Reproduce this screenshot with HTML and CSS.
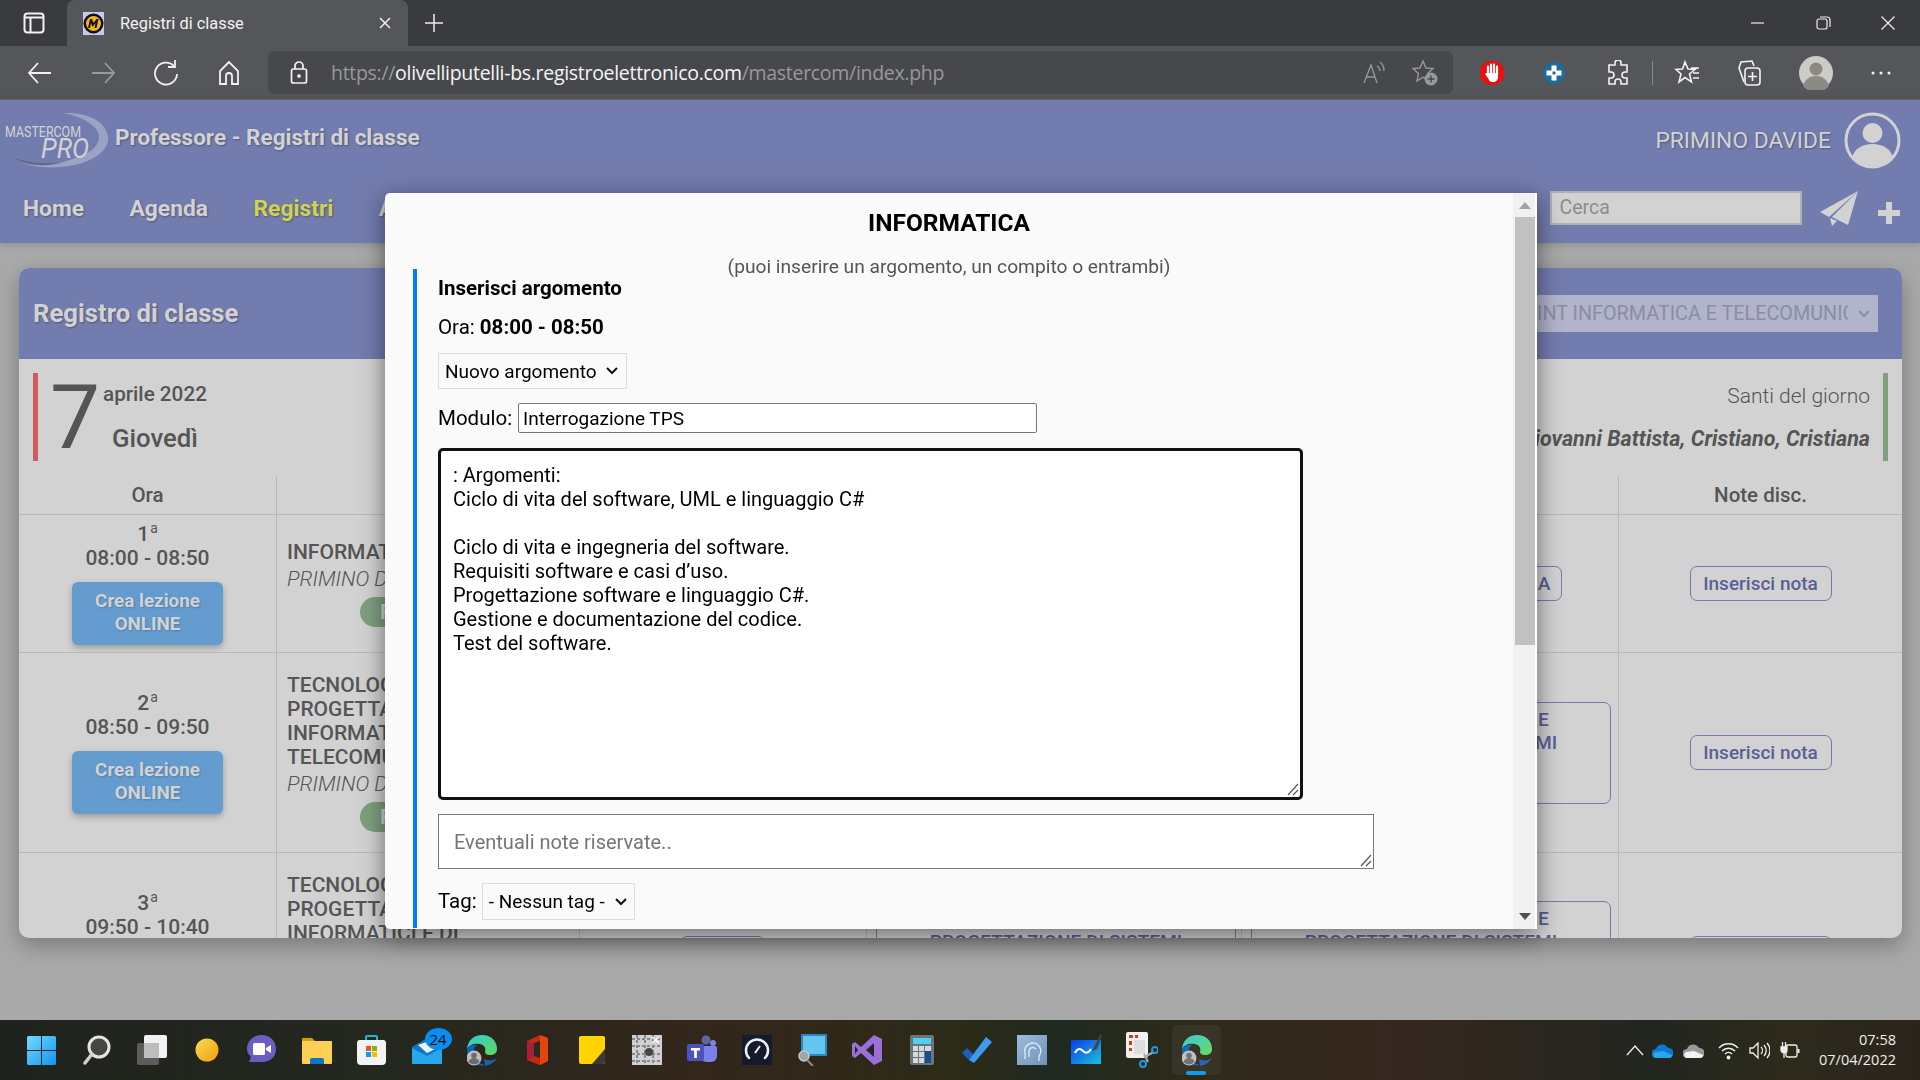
FILE: index.html
```html
<!DOCTYPE html>
<html lang="it">
<head>
<meta charset="utf-8">
<title>Registri di classe</title>
<link rel="stylesheet" href="styles.css">
</head>
<body>
<div class="screen">

  <div class="tabstrip">
    <div class="sidebtn"><svg width="22" height="22" viewBox="0 0 22 22" fill="none" stroke="#f2f2f2" stroke-width="2"><rect x="1.500" y="1.500" width="19" height="19" rx="3"/><path d="M1.500 5.500h19M7.500 5.500v15" /></svg></div>
    <div class="tab">
      <svg class="favicon" width="21" height="23" viewBox="0 0 21 23"><rect width="21" height="23" fill="#c9c9ee"/><circle cx="10.500" cy="11.500" r="10" fill="#111"/><circle cx="10.500" cy="11.500" r="7.500" fill="#f4b41a"/><path d="M5 16l2-9h2l1.500 4 3-4h2l-2 9h-2l1-5-3 4-1.500-4-1 5z" fill="#111"/></svg>
      <span class="tabtitle">Registri di classe</span>
      <svg class="tabclose" width="14" height="14" viewBox="0 0 14 14" stroke="#eee" stroke-width="1.500"><path d="M2 2l10 10M12 2L2 12"/></svg>
    </div>
    <svg class="newtab" width="20" height="20" viewBox="0 0 20 20" stroke="#eee" stroke-width="1.500"><path d="M10 1v18M1 10h18"/></svg>
    <div class="winctl">
      <svg width="16" height="16" viewBox="0 0 16 16" stroke="#eee" stroke-width="1.200" fill="none"><path d="M1 8h13"/></svg>
      <svg width="16" height="16" viewBox="0 0 16 16" stroke="#eee" stroke-width="1.200" fill="none"><rect x="2" y="4" width="10" height="10" rx="2"/><path d="M5 2h7a3 3 0 0 1 3 3v7"/></svg>
      <svg width="16" height="16" viewBox="0 0 16 16" stroke="#eee" stroke-width="1.200" fill="none"><path d="M1.500 1.500l13 13M14.500 1.500l-13 13"/></svg>
    </div>
  </div>

  <div class="toolbar">
    <div class="navicons">
      <svg width="28" height="28" viewBox="0 0 28 28" fill="none" stroke="#f2f2f2" stroke-width="1.800"><path d="M25 14H3M12 4L3 14l9 10"/></svg>
      <svg width="28" height="28" viewBox="0 0 28 28" fill="none" stroke="#98999c" stroke-width="1.800"><path d="M3 14h22M16 4l9 10-9 10"/></svg>
      <svg width="28" height="28" viewBox="0 0 28 28" fill="none" stroke="#f2f2f2" stroke-width="1.800"><path d="M22 7a11 11 0 1 0 3 8M23 1v7h-7"/></svg>
      <svg width="28" height="28" viewBox="0 0 28 28" fill="none" stroke="#f2f2f2" stroke-width="1.800"><path d="M14 3L5 12v13h6v-8a3 3 0 0 1 6 0v8h6V12z"/></svg>
    </div>
    <div class="urlbar">
      <svg class="lock" width="20" height="24" viewBox="0 0 20 24" fill="none" stroke="#f2f2f2" stroke-width="1.700"><rect x="2.500" y="8" width="15" height="14" rx="2"/><path d="M6 8V5a4 4 0 0 1 8 0v3"/><circle cx="10" cy="15" r="1" fill="#f2f2f2"/></svg>
      <span class="url">https://<b class="urlhost">olivelliputelli-bs.registroelettronico.com</b>/mastercom/index.php</span>
      <svg class="readaloud" width="26" height="26" viewBox="0 0 26 26" fill="none" stroke="#98999c" stroke-width="1.300"><path d="M3 23L10 5l6 18M5.500 17h9"/><path d="M16 6a6 6 0 0 1 3 5M19 2a11 11 0 0 1 4 9"/></svg>
      <svg class="favadd" width="28" height="28" viewBox="0 0 28 28"><path d="M12 2l3 7 7 .6-5.300 5 1.500 7.400-6.200-3.800L6 22l1.500-7.400L2 9.600 9 9z" fill="none" stroke="#98999c" stroke-width="1.400"/><circle cx="20" cy="20" r="6.500" fill="#98999c"/><path d="M20 16.500v7M16.500 20h7" stroke="#47484c" stroke-width="1.400"/></svg>
    </div>
    <div class="exticons">
      <svg width="24" height="24" viewBox="0 0 24 24"><path d="M7 0h10l7 7v10l-7 7H7l-7-7V7z" fill="#e81010"/><path d="M8 5.500v9M11 3.500v10M14 3.500v10M17 5.500v9" stroke="#fff" stroke-width="2.200" stroke-linecap="round"/><path d="M7 12h11v4c0 3-2 5-5 5-3 0-4-1.500-5-4l-3-4 1.500-1z" fill="#fff"/></svg>
      <svg width="24" height="24" viewBox="0 0 24 24"><circle cx="12" cy="12" r="11" fill="#1d6c9b"/><path d="M9.500 4.500h5v5h5v5h-5v5h-5v-5h-5v-5h5z" fill="#fff"/><rect x="10.500" y="10.500" width="3" height="3" fill="#1d6c9b"/></svg>
      <svg width="26" height="26" viewBox="0 0 26 26" fill="none" stroke="#f2f2f2" stroke-width="1.600"><path d="M10 3a3 3 0 0 1 6 0v2h6v7h-2a3 3 0 0 0 0 6h2v6h-6v-2a3 3 0 0 0-6 0v2H4v-6h2a3 3 0 0 0 0-6H4V5h6z"/></svg>
      <span class="extsep"></span>
      <svg width="28" height="28" viewBox="0 0 28 28" fill="none" stroke="#f2f2f2" stroke-width="1.600"><path d="M11 3l3 7 7 .5-5.500 4.500 2 8-6.500-4.500L5 23l2-8-5-4.500L8.500 10zM17 9h8M19 14h6M19 19h6"/></svg>
      <svg width="28" height="28" viewBox="0 0 28 28" fill="none" stroke="#f2f2f2" stroke-width="1.600"><path d="M9 23L4 9l2-6 11-1 2 5"/><rect x="10" y="9" width="15" height="17" rx="3"/><path d="M17.500 13v9M13 17.500h9"/></svg>
      <svg width="34" height="34" viewBox="0 0 34 34"><circle cx="17" cy="17" r="17" fill="#cdcbc5"/><circle cx="17" cy="13" r="6.500" fill="#8c8a84"/><path d="M4 30c2-7 7-10 13-10s11 3 13 10a17 17 0 0 1-26 0z" fill="#8c8a84"/></svg>
      <svg width="24" height="24" viewBox="0 0 24 24" fill="#f2f2f2"><circle cx="4" cy="12" r="1.500"/><circle cx="12" cy="12" r="1.500"/><circle cx="20" cy="12" r="1.500"/></svg>
    </div>
  </div>

  <div class="app">
    <header class="apphead">
      <div class="headtop">
        <svg class="logo" width="106" height="56" viewBox="0 0 106 56"><path d="M60 0c26-1 44 9 45 25 1 18-30 32-66 29-12-1-24-5-30-10 16 6 38 8 54 4 20-5 33-13 33-24C96 13 80 4 60 0z" fill="#9ba3c4"/><path d="M9 44c16 6 38 8 54 4-18 7-42 5-54-4z" fill="#5c6a86"/><text class="logotxt1" x="2" y="24" textLength="76" lengthAdjust="spacingAndGlyphs">MASTERCOM</text><text class="logotxt2" x="38" y="45" textLength="48" lengthAdjust="spacingAndGlyphs">PRO</text></svg>
        <h1 class="apptitle">Professore - Registri di classe</h1>
        <div class="user">
          <span class="username">PRIMINO DAVIDE</span>
          <svg width="57" height="57" viewBox="0 0 57 57"><circle cx="28.500" cy="28.500" r="26.500" fill="none" stroke="#d2d2d2" stroke-width="3"/><circle cx="28.500" cy="21" r="10" fill="#d2d2d2"/><path d="M8 46c2-9 10-14 20.500-14S47 37 49 46c-5 5-12 8-20.500 8S13 51 8 46z" fill="#d2d2d2"/></svg>
        </div>
      </div>
      <nav class="headnav">
        <a class="navlink">Home</a>
        <a class="navlink">Agenda</a>
        <a class="navlink navactive">Registri</a>
        <a class="navlink">Altro</a>
        <div class="navright">
          <div class="search">Cerca</div>
          <svg class="send" width="38" height="35" viewBox="0 0 38 35" fill="#d2d2d2"><path d="M38 0L0 21l9 5z"/><path d="M38 0L12 26l16 8z"/><path d="M10 27l2 8 5-5z"/></svg>
          <svg class="plus" width="22" height="22" viewBox="0 0 22 22" fill="#d2d2d2"><path d="M8 0h6v8h8v6h-8v8H8v-8H0V8h8z"/></svg>
        </div>
      </nav>
    </header>

    <section class="panel">
      <div class="panelhead">
        <h2 class="paneltitle">Registro di classe</h2>
        <div class="classsel"><span class="classtxt">5 INT INFORMATICA E TELECOMUNICAZIONI</span><svg width="14" height="10" viewBox="0 0 14 10" fill="none" stroke="#8a8da8" stroke-width="2"><path d="M2 2l5 5 5-5"/></svg></div>
      </div>
      <div class="daterow">
        <div class="dateleft">
          <span class="daynum">7</span>
          <div class="datetxt"><span class="month">aprile 2022</span><span class="weekday">Giovedì</span></div>
        </div>
        <div class="saints">
          <span class="saintlabel">Santi del giorno</span>
          <span class="saintnames">Giovanni Battista, Cristiano, Cristiana</span>
        </div>
      </div>
      <div class="tr thead">
        <div class="td">Ora</div><div class="td"></div><div class="td"></div><div class="td"></div><div class="td"></div><div class="td">Note disc.</div>
      </div>
      <div class="tr row1">
        <div class="td hour"><span class="hnum">1<sup>a</sup></span><span>08:00 - 08:50</span><a class="online">Crea lezione<br>ONLINE</a></div>
        <div class="td subj"><span>INFORMATICA</span><em class="teacher">PRIMINO DAVIDE</em><span class="pillwrap"><span class="pill">Firma</span></span></div>
        <div class="td"></div>
        <div class="td"></div>
        <div class="td center"><a class="boxbtn short">INSERISCI FIRMA</a></div>
        <div class="td center"><a class="notebtn">Inserisci nota</a></div>
      </div>
      <div class="tr row2">
        <div class="td hour"><span class="hnum">2<sup>a</sup></span><span>08:50 - 09:50</span><a class="online">Crea lezione<br>ONLINE</a></div>
        <div class="td subj"><span>TECNOLOGIE E<br>PROGETTAZIONE DI SISTEMI<br>INFORMATICI E DI<br>TELECOMUNICAZIONI</span><em class="teacher">PRIMINO DAVIDE</em><span class="pillwrap"><span class="pill">Firma</span></span></div>
        <div class="td"></div>
        <div class="td"></div>
        <div class="td center"><div class="lessonbox"><span class="lessontitle">TECNOLOGIE E SISTEMI E</span><span>PROGETTAZIONE DI SISTEMI</span></div></div>
        <div class="td center"><a class="notebtn">Inserisci nota</a></div>
      </div>
      <div class="tr row3">
        <div class="td hour"><span class="hnum">3<sup>a</sup></span><span>09:50 - 10:40</span></div>
        <div class="td subj"><span>TECNOLOGIE E<br>PROGETTAZIONE DI SISTEMI<br>INFORMATICI E DI<br>TELECOMUNICAZIONI</span></div>
        <div class="td"><a class="colbtn">Firma</a></div>
        <div class="td"><div class="lessonbox nextbox"><span class="lessontitle">TECNOLOGIE E SISTEMI E</span><span>PROGETTAZIONE DI SISTEMI</span></div></div>
        <div class="td"><div class="lessonbox nextbox"><span class="lessontitle">TECNOLOGIE E SISTEMI E</span><span>PROGETTAZIONE DI SISTEMI</span></div></div>
        <div class="td center top"><a class="notebtn">Inserisci nota</a></div>
      </div>
    </section>

    <div class="modal">
      <div class="modalbody">
        <h3 class="modaltitle">INFORMATICA</h3>
        <p class="modalsub">(puoi inserire un argomento, un compito o entrambi)</p>
        <div class="formblock">
          <div class="formhead">Inserisci argomento</div>
          <div class="formora">Ora: <b>08:00 - 08:50</b></div>
          <select class="sel selarg"><option>Nuovo argomento</option></select>
          <div class="modrow"><label class="modlabel">Modulo:</label><input class="modinput" type="text" value="Interrogazione TPS"></div>
          <textarea class="argarea" spellcheck="false">: Argomenti:
Ciclo di vita del software, UML e linguaggio C#

Ciclo di vita e ingegneria del software.
Requisiti software e casi d’uso.
Progettazione software e linguaggio C#.
Gestione e documentazione del codice.
Test del software.</textarea>
          <textarea class="notearea" placeholder="Eventuali note riservate.."></textarea>
          <div class="tagrow"><label class="taglabel">Tag:</label><select class="sel seltag"><option>- Nessun tag -</option></select></div>
        </div>
      </div>
      <div class="scrollbar">
        <span class="arrowup"></span>
        <span class="thumb"></span>
        <span class="arrowdown"></span>
      </div>
    </div>
  </div>

  <footer class="taskbar">
    <div class="tbicons">
      <div class="tbi"><svg width="29" height="29" viewBox="0 0 29 29"><defs><linearGradient id="w" x1="0" y1="0" x2="1" y2="1"><stop offset="0" stop-color="#6fdcff"/><stop offset="1" stop-color="#1492f0"/></linearGradient></defs><path d="M0 1.500A1.500 1.500 0 0 1 1.500 0H14v14H0zM15 0h12.500A1.500 1.500 0 0 1 29 1.500V14H15zM0 15h14v14H1.500A1.500 1.500 0 0 1 0 27.500zM15 15h14v12.500a1.500 1.500 0 0 1-1.500 1.500H15z" fill="url(#w)"/></svg></div>
      <div class="tbi"><svg width="28" height="30" viewBox="0 0 28 30"><circle cx="16" cy="12" r="10" fill="#43473f" stroke="#e4e4e4" stroke-width="3"/><path d="M9 19L2 28" stroke="#d0d0d0" stroke-width="3.500" stroke-linecap="round"/></svg></div>
      <div class="tbi"><svg width="30" height="30" viewBox="0 0 30 30"><rect x="0" y="8" width="22" height="22" rx="2" fill="#5c5c5c"/><rect x="7" y="0" width="23" height="23" rx="2" fill="#f2f2f2"/><rect x="7" y="8" width="15" height="15" fill="#bdbdbd"/></svg></div>
      <div class="tbi"><svg width="24" height="24" viewBox="0 0 24 24"><defs><linearGradient id="y" x1="0" y1="0" x2="1" y2="1"><stop offset="0" stop-color="#f8de50"/><stop offset="1" stop-color="#f59a12"/></linearGradient></defs><circle cx="12" cy="12" r="11.500" fill="url(#y)"/></svg></div>
      <div class="tbi"><svg width="29" height="30" viewBox="0 0 29 30"><path d="M14.500 0C23 0 29 6 29 14s-6 13-14 13H2l2-5C1.500 19.500 0 17 0 14 0 6 6 0 14.500 0z" fill="#6a5fc1"/><rect x="6" y="8" width="12" height="12" rx="1.500" fill="#fff"/><path d="M19 13l5-3v8l-5-3z" fill="#fff"/></svg></div>
      <div class="tbi"><svg width="30" height="28" viewBox="0 0 30 28"><path d="M0 3a1 1 0 0 1 1-1h9l3 3h16a1 1 0 0 1 1 1v4H0z" fill="#d99e0b"/><rect y="5" width="30" height="23" rx="1" fill="#fcd055"/><path d="M8 24a2 2 0 0 1 2-2h10a2 2 0 0 1 2 2v4H8z" fill="#0a74c9"/></svg></div>
      <div class="tbi"><svg width="29" height="30" viewBox="0 0 29 30"><path d="M9 6V2a1 1 0 0 1 1-1h9a1 1 0 0 1 1 1v4" fill="none" stroke="#22b5d8" stroke-width="2"/><path d="M0 8a3 3 0 0 1 2-3h25a3 3 0 0 1 2 3v18a4 4 0 0 1-4 4H4a4 4 0 0 1-4-4z" fill="#f3f3f3"/><rect x="9" y="11" width="5" height="5" fill="#f25022"/><rect x="15" y="11" width="5" height="5" fill="#7fba00"/><rect x="9" y="17" width="5" height="5" fill="#00a4ef"/><rect x="15" y="17" width="5" height="5" fill="#ffb900"/></svg></div>
      <div class="tbi mailitem"><svg width="30" height="27" viewBox="0 0 30 27"><path d="M0 10L17 0l13 10v17H0z" fill="#0f79c9"/><path d="M6 8L20 3l5 8-10 5z" fill="#f4f4f4"/><path d="M0 11l15 8 15-8v16H0z" fill="#28a8ea"/></svg><span class="badge">24</span></div>
      <div class="tbi"><svg class="edge" width="30" height="31" viewBox="0 0 30 31"><use href="#edgeicon"/></svg></div>
      <div class="tbi"><svg width="24" height="30" viewBox="0 0 24 30"><path d="M2 6L15 0l8 3v23l-8 4-13-5z" fill="#c42a12"/><path d="M15 0l8 3v23l-8 4z" fill="#e6430f"/><path d="M9 8l6-2v17l-6-2z" fill="#2a2a20"/><path d="M2 6l7 2v13l-7 4z" fill="#a81f3c"/></svg></div>
      <div class="tbi"><svg width="26" height="28" viewBox="0 0 26 28"><rect width="26" height="28" rx="2" fill="#ffd400"/><path d="M26 13v13a2 2 0 0 1-2 2H13z" fill="#3c3a36"/></svg></div>
      <div class="tbi"><svg width="30" height="30" viewBox="0 0 30 30"><rect width="30" height="30" fill="#d0d0d0"/><path d="M0 4h30M0 11h30M0 19h30M0 26h30M5 0v30M13 0v30M21 0v30" stroke="#85888a" stroke-width="2" stroke-dasharray="3 2"/><circle cx="17" cy="17" r="4" fill="#444"/><path d="M20 2l7 6M27 2l-7 6" stroke="#fff" stroke-width="1.500"/></svg></div>
      <div class="tbi"><svg width="30" height="30" viewBox="0 0 30 30"><circle cx="19" cy="5" r="4.500" fill="#6264a7"/><circle cx="26" cy="8" r="3" fill="#7b83eb"/><path d="M12 11h16a2 2 0 0 1 2 2v8a6 6 0 0 1-6 6h-4a8 8 0 0 1-8-8z" fill="#7b83eb"/><rect y="9" width="17" height="17" rx="2" fill="#4b53bc"/><path d="M4 13h9v2.500H9.900V23H7.100v-7.500H4z" fill="#fff"/></svg></div>
      <div class="tbi"><svg width="30" height="30" viewBox="0 0 30 30"><rect width="30" height="30" fill="#141b2e"/><path d="M7 23a11 11 0 1 1 16 0" fill="none" stroke="#f2f2f2" stroke-width="2.500" stroke-linecap="round"/><path d="M13 18l5-7" stroke="#f2f2f2" stroke-width="2"/></svg></div>
      <div class="tbi"><svg width="30" height="32" viewBox="0 0 30 32"><rect x="4" width="26" height="22" fill="#2e86c1"/><rect x="6" y="2" width="22" height="18" fill="#63c6ef"/><circle cx="7" cy="22" r="5" fill="#9aa8ad" stroke="#c9c9c9" stroke-width="1.500"/><path d="M10 26l6 6" stroke="#8a8a8a" stroke-width="2"/></svg></div>
      <div class="tbi"><svg width="30" height="30" viewBox="0 0 30 30"><path d="M22 0l8 4v22l-8 4L9 18l-6 5-3-2V9l3-2 6 5z" fill="#9a6fd8"/><path d="M22 8L14 15l8 7z" fill="#26252a"/><path d="M3 11l3 4-3 4z" fill="#26252a"/></svg></div>
      <div class="tbi"><svg width="24" height="30" viewBox="0 0 24 30"><rect width="24" height="30" rx="2" fill="#6b7479"/><rect x="3" y="3" width="18" height="6" fill="#4fd0ee"/><path d="M3 11h5v5H3zM9 11h5v5H9zM3 17h5v5H3zM9 17h5v5H9zM3 23h5v5H3zM9 23h5v5H9z" fill="#d5d9dc"/><rect x="15" y="11" width="6" height="17" fill="#144e92"/><rect x="15" y="11" width="6" height="5" fill="#d5d9dc"/></svg></div>
      <div class="tbi"><svg width="30" height="26" viewBox="0 0 30 26"><path d="M0 16l5-5 7 7-5 5z" fill="#1c5dbf"/><path d="M7 23L24 0l6 5-18 21z" fill="#3c9bf0"/></svg></div>
      <div class="tbi"><svg width="30" height="30" viewBox="0 0 30 30"><defs><linearGradient id="h" x1="0" y1="0" x2="1" y2="1"><stop offset="0" stop-color="#9dbcdb"/><stop offset="1" stop-color="#6f93b8"/></linearGradient></defs><rect width="30" height="30" fill="url(#h)"/><path d="M8 24v-6a8 8 0 1 1 14 3v5M12 22v-6a4 4 0 0 1 7-2" fill="none" stroke="#e3ebf2" stroke-width="1.300"/></svg></div>
      <div class="tbi"><svg width="32" height="30" viewBox="0 0 32 30"><defs><linearGradient id="b" x1="0" y1="0" x2="1" y2="1"><stop offset="0" stop-color="#0b3cf0"/><stop offset="1" stop-color="#1cc2d8"/></linearGradient></defs><path d="M0 6a1 1 0 0 1 1-1h29v23a1 1 0 0 1-1 1H1a1 1 0 0 1-1-1z" fill="url(#b)"/><path d="M4 18c3-6 6-4 8-2s5 3 8-2" fill="none" stroke="#fff" stroke-width="2"/><path d="M21 16L29 0h2l-5 14z" fill="#444"/></svg></div>
      <div class="tbi"><svg width="32" height="36" viewBox="0 0 32 36"><rect width="22" height="26" rx="2" fill="#f0f0f0"/><path d="M3 3h4v3H3zM9 3h3v3H9zM3 9h3v4H3zM3 16h3v3H3z" fill="#d43b1e"/><rect x="8" y="8" width="11" height="14" fill="#ddd"/><path d="M18 22l4 8M28 20l-10 5" stroke="#aaa" stroke-width="2"/><circle cx="17" cy="32" r="3" fill="none" stroke="#1e9be0" stroke-width="2"/><circle cx="29" cy="18" r="3" fill="none" stroke="#1e9be0" stroke-width="2"/></svg></div>
      <div class="tbi tbactive"><svg class="edge" width="30" height="31" viewBox="0 0 30 31"><use href="#edgeicon"/></svg><span class="tbunder"></span></div>
    </div>
    <div class="tray">
      <svg class="chev" width="18" height="12" viewBox="0 0 18 12" fill="none" stroke="#eee" stroke-width="1.300"><path d="M1 11l8-9 8 9"/></svg>
      <svg width="21" height="15" viewBox="0 0 21 15"><path d="M4 6a6.500 6.500 0 0 1 12-1 4.800 4.800 0 0 1 1 10H4a4 4 0 0 1 0-9z" fill="#0a78d4"/><path d="M3 15a3.500 3.500 0 0 1 0-6l8-1 9 4c.5 1-1 3-3 3z" fill="#28a8ea"/></svg>
      <svg width="21" height="15" viewBox="0 0 21 15"><path d="M4 6a6.500 6.500 0 0 1 12-1 4.800 4.800 0 0 1 1 10H4a4 4 0 0 1 0-9z" fill="#9a9a9a"/><path d="M3 15a3.500 3.500 0 0 1 0-6l8-1 9 4c.5 1-1 3-3 3z" fill="#f2f2f2"/></svg>
      <svg class="wifi" width="21" height="19" viewBox="0 0 21 19" fill="none" stroke="#eee" stroke-width="1.500"><path d="M1 7a13 13 0 0 1 19 0M4 10a9 9 0 0 1 13 0M7 13a5 5 0 0 1 7 0"/><circle cx="10.500" cy="16.500" r="1.200" fill="#eee"/></svg>
      <svg width="21" height="19" viewBox="0 0 21 19" fill="none" stroke="#eee" stroke-width="1.300"><path d="M1 7v5h3l5 5V2L4 7zM12 6a5 5 0 0 1 0 7M15 4a8 8 0 0 1 0 11M18 2a11 11 0 0 1 0 15"/></svg>
      <svg width="20" height="19" viewBox="0 0 20 19" fill="none" stroke="#eee" stroke-width="1.300"><rect x="6" y="4" width="11" height="12" rx="2"/><path d="M18.500 8v4" stroke-width="2"/><path d="M1 6h6v3a3 3 0 0 1-6 0zM2.500 1v5M5.500 1v5M4 12v5" fill="#eee"/></svg>
    </div>
    <div class="clock"><span>07:58</span><span>07/04/2022</span></div>
  </footer>
</div>

<svg class="defs" width="0" height="0"><defs>
  <linearGradient id="eg" x1="0" y1="0" x2="1" y2="1"><stop offset="0" stop-color="#33c6d8"/><stop offset="1" stop-color="#5fdc58"/></linearGradient>
  <g id="edgeicon"><path d="M0 14C1 5 7 0 15 0c9 0 15 6 15 14 0 4-3 6-7 6-3 0-5-1-5-3 1-3 0-7-5-8C7 8 2 10 0 14z" fill="url(#eg)"/><path d="M0 14c2-3 6-5 10-4-3 2-4 6-3 10 1 5 6 9 11 10-2 .5-3 .5-4 .5C6 30.500 0 23 0 14z" fill="#0b63b6"/><path d="M18 31c5-1 9-3 12-8-4 3-9 3-13 1z" fill="#1e5fa8"/><circle cx="7" cy="23" r="7.500" fill="#bdbdbd"/><circle cx="7" cy="20.500" r="2.800" fill="#6c6c6c"/><path d="M1.500 27c1-3 3-4 5.500-4s4.500 1 5.500 4a7.500 7.500 0 0 1-11 0z" fill="#6c6c6c"/></g>
</defs></svg>
</body>
</html>
```
FILE: styles.css
```css
* { box-sizing: border-box; }
html, body { margin: 0; padding: 0; height: 100%; overflow: hidden; }
body { font-family: Roboto, "Liberation Sans", sans-serif; background: #a9a9a9; }
a { display: block; }
.defs { position: absolute; }
.screen { width: 1920px; height: 1080px; display: flex; flex-direction: column; overflow: hidden; }

/* browser chrome */
.tabstrip { height: 46px; background: #3a3b3f; display: flex; align-items: center; flex: none; }
.sidebtn { width: 67px; display: flex; justify-content: center; }
.tab { width: 341px; height: 46px; background: #55565a; border-radius: 8px 8px 0 0; display: flex; align-items: center; padding-left: 16px; color: #f2f2f2; font-size: 16.400px; }
.tabtitle { margin-left: 16px; flex: 1; }
.tabclose { margin-right: 16px; }
.newtab { margin-left: 16px; }
.winctl { margin-left: auto; display: flex; gap: 49px; padding-right: 24px; }
.toolbar { height: 54px; background: #55565a; border-bottom: 1px solid #6a6b6f; display: flex; align-items: center; flex: none; }
.navicons { width: 268px; padding-left: 26px; display: flex; gap: 35px; }
.urlbar { width: 1185px; height: 43px; background: #47484c; border-radius: 6px; display: flex; align-items: center; padding-left: 21px; }
.url { margin-left: 22px; font-size: 19.500px; color: #98999c; font-family: "Open Sans", Roboto, sans-serif; letter-spacing: -0.300px; flex: 1; white-space: nowrap; }
.urlhost { color: #f5f5f5; font-weight: 400; }
.readaloud { margin-right: 24px; }
.favadd { margin-right: 14px; }
.exticons { flex: 1; display: flex; align-items: center; padding-left: 27px; }
.exticons svg:nth-child(1) { margin-right: 38px; }
.exticons svg:nth-child(2) { margin-right: 39px; }
.exticons svg:nth-child(3) { margin-right: 21px; }
.extsep { width: 1px; height: 24px; background: #85868a; margin-right: 21px; }
.exticons svg:nth-child(5) { margin-right: 33px; }
.exticons svg:nth-child(6) { margin-right: 36px; }
.exticons svg:nth-child(7) { margin-right: 36px; }

/* app */
.app { flex: 1; position: relative; background: #a9a9a9; min-height: 0; }
.apphead { height: 143px; background: #737cae; display: flex; flex-direction: column; box-shadow: 0 2px 8px rgba(0,0,0,.15); }
.headtop { height: 80px; display: flex; align-items: center; padding: 0 20px 0 3px; }
.logo { margin-top: 2px; overflow: visible; flex: none; }
.logotxt1 { font-family: Roboto, sans-serif; font-size: 15px; font-weight: 400; fill: #d2d2d2; }
.logotxt2 { font-family: Roboto, sans-serif; font-size: 27px; font-weight: 400; font-style: italic; fill: #d2d2d2; }
.apptitle { margin: 0 0 6px 6px; font-size: 22.500px; font-weight: 700; color: #d2d2d2; text-shadow: 1px 1px 2px rgba(0,0,0,.3); }
.user { margin-left: auto; display: flex; align-items: center; gap: 13px; margin-right: -1px; }
.username { font-size: 22.800px; font-weight: 400; color: #d2d2d2; text-shadow: 1px 1px 2px rgba(0,0,0,.3); }
.headnav { flex: 1; display: flex; align-items: flex-start; padding: 12px 20px 0 23px; }
.navlink { font-size: 22.800px; font-weight: 700; color: #d2d2d2; text-shadow: 1px 1px 2px rgba(0,0,0,.3); margin-right: 45.500px; line-height: 34px; }
.navactive { color: #d1d34f; }
.navright { margin-left: auto; display: flex; align-items: center; }
.search { width: 252px; height: 34px; margin-top: -2px; background: #d2d2d2; border: 2px solid #b0b0b0; color: #8c8c8c; font-size: 19.500px; line-height: 30px; padding-left: 8px; }
.send { margin: -1px 20px 0 18.500px; }
.plus { margin-top: 7px; }

.panel { margin: 25px 18px 0 19px; height: 670px; background: #d2d2d2; border-radius: 10px; overflow: hidden; box-shadow: 0 8px 22px rgba(0,0,0,.28); color: #555; }
.panelhead { height: 91px; background: #737cae; display: flex; align-items: center; justify-content: space-between; padding: 0 24px 2px 14px; }
.paneltitle { margin: 0; font-size: 25.700px; font-weight: 700; color: #d2d2d2; text-shadow: 1px 1px 2px rgba(0,0,0,.3); }
.classsel { width: 360px; height: 37px; margin-top: 2px; background: #b1b4cb; display: flex; align-items: center; justify-content: space-between; padding: 0 7px 0 3px; color: #8a8da8; font-size: 19.800px; }
.classtxt { width: 327px; overflow: hidden; white-space: nowrap; }
.daterow { height: 117px; display: flex; justify-content: space-between; align-items: flex-start; padding: 14px 14px 0 14px; }
.dateleft { height: 88px; border-left: 5px solid #d25a5a; display: flex; padding-left: 12px; }
.daynum { font-size: 89px; font-weight: 400; line-height: 88px; width: 53px; margin-top: 1px; }
.datetxt { display: flex; flex-direction: column; align-items: center; font-weight: 500; }
.month { font-size: 20.700px; line-height: 26px; margin-top: 8px; }
.weekday { font-size: 25.700px; line-height: 30px; margin-top: 16px; }
.saints { height: 88px; border-right: 5px solid #7f9f7f; padding-right: 13px; display: flex; flex-direction: column; align-items: flex-end; }
.saintlabel { font-size: 21px; font-weight: 300; line-height: 26px; margin-top: 10px; }
.saintnames { font-size: 21.500px; font-weight: 700; font-style: italic; line-height: 26px; margin-top: 17px; white-space: nowrap; }

.tr { display: grid; grid-template-columns: 258px 303px 287px 375px 377px 283px; border-bottom: 1px solid #b8b8b8; font-size: 21px; font-weight: 500; }
.td { border-right: 1px solid #b8b8b8; min-width: 0; overflow: hidden; }
.td:last-child { border-right: 0; }
.thead { height: 39px; text-align: center; line-height: 38px; font-size: 20.500px; }
.row1 { height: 138px; }
.row2 { height: 200px; }
.row3 { height: 86px; border-bottom: 0; }
.hour { display: flex; flex-direction: column; align-items: center; line-height: 24px; }
.row1 .hour { padding-top: 7px; }
.row2 .hour { padding-top: 38px; }
.row3 .hour { padding-top: 38px; }
.hnum sup { font-size: 14px; line-height: 0; vertical-align: 8px; font-weight: 400; margin-left: 1px; }
.online { width: 151px; height: 63px; margin-top: 12px; background: #649cd0; border-radius: 6px; box-shadow: 0 3px 6px rgba(0,0,0,.25); color: #d2d2d2; text-align: center; font-size: 18.800px; font-weight: 700; line-height: 23px; padding-top: 8px; text-shadow: 1px 1px 2px rgba(0,0,0,.2); }
.subj { display: flex; flex-direction: column; padding-left: 10px; line-height: 24px; white-space: nowrap; }
.row1 .subj { padding-top: 25px; }
.row2 .subj { padding-top: 20px; }
.row3 .subj { padding-top: 20px; }
.teacher { font-weight: 300; margin-top: 3px; }
.pillwrap { padding-left: 73px; margin-top: 6px; }
.pill { display: inline-block; height: 30px; width: 120px; border-radius: 15px; background: #7f9f7f; color: #d2d2d2; line-height: 30px; padding-left: 20px; font-weight: 700; }
.center { display: flex; align-items: center; justify-content: center; }
.top { align-items: flex-start; padding-top: 83px; }
.notebtn { width: 142px; height: 35px; border: 1px solid #737cae; border-radius: 7px; color: #5a6096; font-size: 19px; text-align: center; line-height: 33px; }
.boxbtn { width: 262px; height: 35px; border: 1px solid #737cae; border-radius: 7px; color: #5a6096; font-size: 19.200px; line-height: 33px; text-align: right; padding-right: 10px; margin-left: 1px; }
.lessonbox { width: 360px; height: 102px; margin-left: 2px; border: 1px solid #737cae; border-radius: 7px; color: #5a6096; display: flex; flex-direction: column; align-items: center; font-size: 19.200px; line-height: 23px; padding-top: 5px; }
.lessontitle { white-space: nowrap; letter-spacing: .6px; }
.nextbox { margin: 48px 0 0 9px; padding-top: 5px; line-height: 23px; }
.colbtn { width: 85px; height: 35px; margin: 83px 0 0 100px; border: 1px solid #737cae; border-radius: 7px; }

/* modal */
.modal { position: absolute; left: 385px; top: 93px; width: 1152px; height: 736px; background: #fafafa; box-shadow: 0 6px 24px rgba(0,0,0,.5); display: flex; border-radius: 5px 0 0 5px; overflow: hidden; color: #000; }
.modalbody { width: 1128px; padding: 0 0 0 28px; }
.modaltitle { margin: 15px 0 0 -28px; text-align: center; font-size: 24.500px; font-weight: 700; line-height: 30px; }
.modalsub { margin: 16px 0 0 -28px; text-align: center; font-size: 19.200px; line-height: 26px; color: #555; }
.formblock { border-left: 4px solid #007bff; height: 659px; margin-top: -11px; padding: 6px 0 0 21px; font-size: 20.500px; }
.formhead { font-weight: 700; font-size: 20.500px; line-height: 26px; }
.formora { line-height: 26px; margin-top: 13px; }
.formora b { font-weight: 700; }
.sel { display: block; appearance: none; -webkit-appearance: none; background: transparent url("data:image/svg+xml,%3Csvg xmlns='http://www.w3.org/2000/svg' width='12' height='8' viewBox='0 0 12 8'%3E%3Cpath d='M1 1l5 5 5-5' fill='none' stroke='%23111' stroke-width='2'/%3E%3C/svg%3E") no-repeat right 8px center; border: 1px solid #ddd; font-family: Roboto, sans-serif; font-size: 19px; color: #000; padding: 0 0 0 6px; border-radius: 0; }
.selarg { width: 189px; height: 36px; margin-top: 13px; }
.modrow { display: flex; align-items: center; margin-top: 14px; gap: 6px; height: 30px; }
.modlabel { font-size: 20.500px; margin-top: -1px; }
.modinput { width: 519px; height: 30px; border: 1px solid #767676; border-radius: 2px; font-family: Roboto, sans-serif; font-size: 19px; padding: 0 4px; color: #000; background: #fff; outline: 0; }
.argarea { display: block; width: 865px; height: 352px; margin-top: 15px; border: 3px solid #111; border-radius: 5px; padding: 12px 12px 13px; font-family: Roboto, sans-serif; font-size: 20px; line-height: 24px; color: #000; background: #fff; outline: 0; }
.notearea { display: block; width: 936px; height: 55px; margin-top: 14px; border: 1px solid #767676; padding: 15px 15px; font-family: Roboto, sans-serif; font-size: 20px; line-height: 24px; background: #fff; outline: 0; }
.notearea::placeholder { color: #757575; opacity: 1; }
.argarea::-webkit-resizer, .notearea::-webkit-resizer { background: url("data:image/svg+xml,%3Csvg xmlns='http://www.w3.org/2000/svg' width='15' height='15' viewBox='0 0 15 15'%3E%3Cpath d='M3 13L13 2M8 13l5-5' fill='none' stroke='%23555' stroke-width='1.200'/%3E%3C/svg%3E") no-repeat center; }
.tagrow { display: flex; align-items: center; gap: 5px; margin-top: 14px; }
.taglabel { font-size: 20.500px; margin-top: -1px; }
.seltag { width: 153px; height: 37px; background-position: right 7px center; }
.scrollbar { width: 24px; height: 736px; background: #f1f1f1; position: relative; display: flex; flex-direction: column; align-items: center; padding-left: 1px; border-right: 2px solid #fff; }
.arrowup { width: 0; height: 0; margin-top: 9px; border: 6.500px solid transparent; border-top: 0; border-bottom: 7px solid #a3a3a3; }
.thumb { width: 20px; height: 428px; margin-top: 8px; background: #c1c1c1; }
.arrowdown { width: 0; height: 0; margin-top: auto; margin-bottom: 9px; border: 6.500px solid transparent; border-bottom: 0; border-top: 7px solid #505050; }

/* taskbar */
.taskbar { height: 60px; flex: none; display: flex; align-items: center; position: relative; background: linear-gradient(90deg, #1f231d 0, #24281f 20%, #33261b 36%, #2c2a18 50%, #1f2a20 55%, #2e2a1b 62%, #36271f 72%, #22261f 86%, #2d2a1c 93%, #2b241d 100%); }
.tbicons { display: flex; padding-left: 14px; }
.tbi { width: 55px; height: 60px; display: flex; align-items: center; justify-content: center; position: relative; }
.badge { position: absolute; left: 25.500px; top: 8px; width: 27px; height: 22px; border-radius: 50%; background: #0a8cf0; color: #111; font-size: 15px; line-height: 22px; text-align: center; font-family: "Open Sans", sans-serif; }
.tbactive::before { content: ""; position: absolute; left: 3px; right: 3px; top: 5px; bottom: 5px; background: rgba(255,255,255,.05); border-radius: 5px; }
.tbunder { position: absolute; left: 17px; width: 20px; height: 4px; top: 51px; border-radius: 2px; background: #0f9cf0; }
.tray { margin-left: auto; display: flex; align-items: center; gap: 10px; }
.chev { margin-right: -2px; }
.wifi { margin-left: 4px; }
.clock { width: 96px; margin-right: 24px; display: flex; flex-direction: column; align-items: flex-end; color: #eee; font-family: "Open Sans", sans-serif; font-size: 14.500px; line-height: 20px; }
```
